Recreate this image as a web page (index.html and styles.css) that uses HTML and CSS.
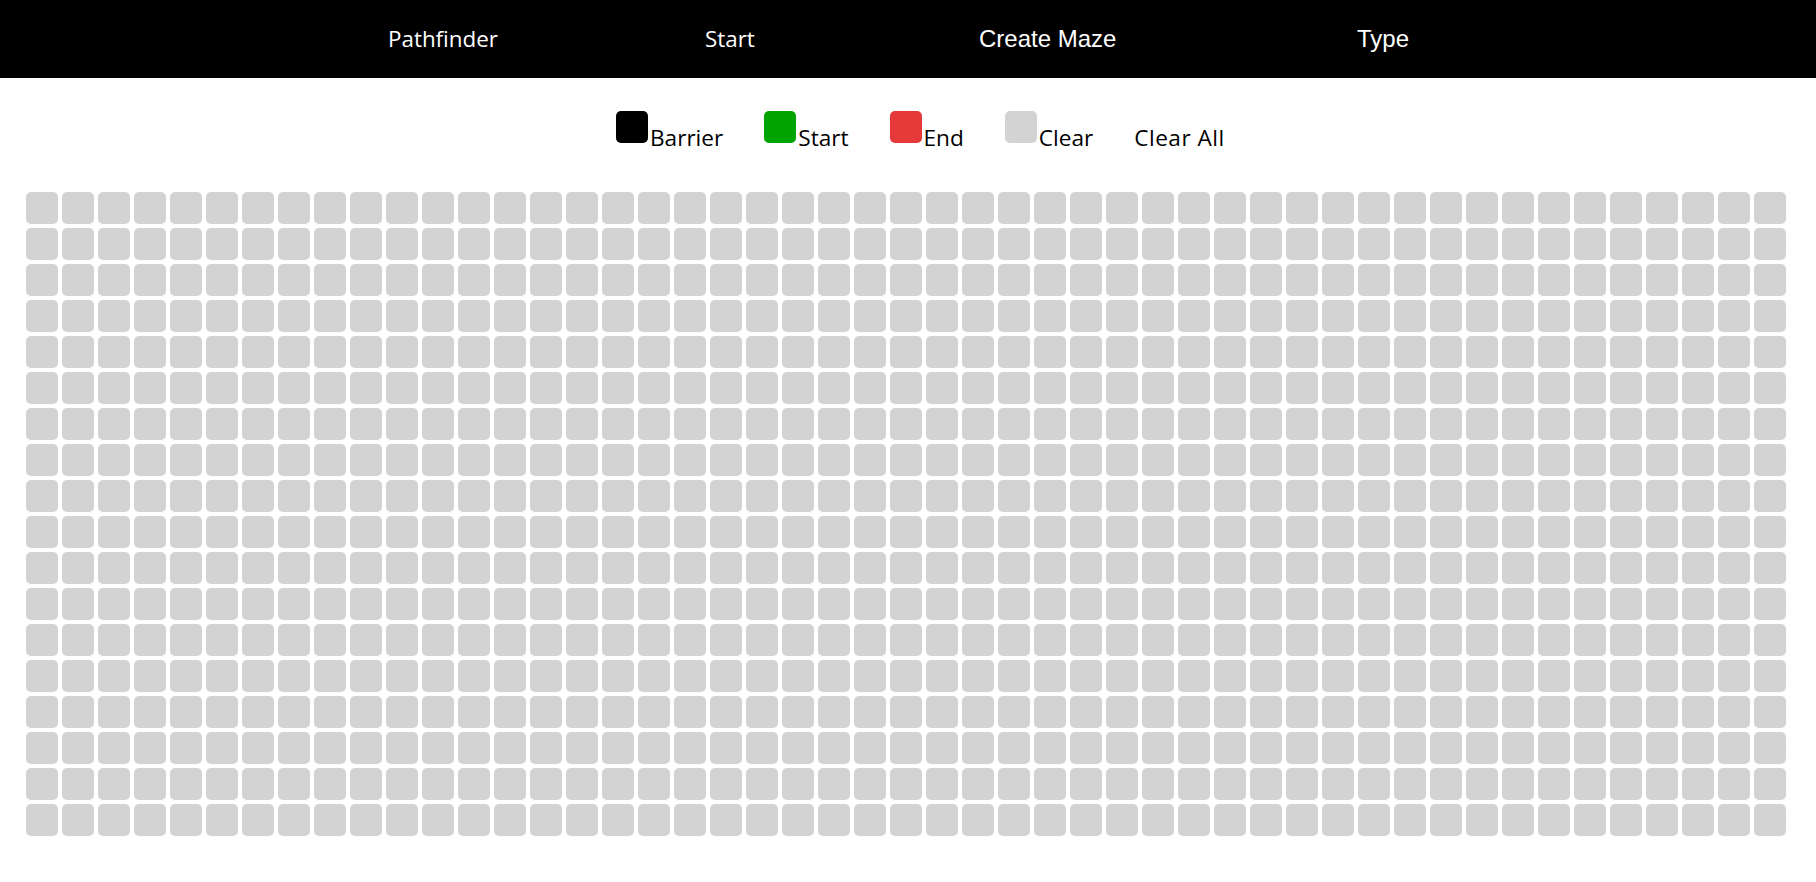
FILE: index.html
```html
<!DOCTYPE html>
<html lang="en">
<head>
<meta charset="utf-8">
<title>Pathfinder</title>
<link rel="stylesheet" href="styles.css">
</head>
<body>
<header class="topbar">
  <nav class="nav">
    <span class="nav-item nav-brand">Pathfinder</span>
    <span class="nav-item nav-start">Start</span>
    <span class="nav-item nav-maze">Create Maze</span>
    <span class="nav-item nav-type">Type</span>
  </nav>
</header>
<section class="legend">
  <span class="legend-item"><span class="swatch swatch-barrier"></span>Barrier</span>
  <span class="legend-item"><span class="swatch swatch-start"></span>Start</span>
  <span class="legend-item"><span class="swatch swatch-end"></span>End</span>
  <span class="legend-item"><span class="swatch swatch-clear"></span>Clear</span>
  <span class="legend-item legend-all">Clear All</span>
</section>
<main class="board" id="board"></main>
<script src="script.js"></script>
</body>
</html>
```
FILE: styles.css
```css
* { box-sizing: border-box; }
body {
  margin: 0;
  background: #fff;
  font-family: "Open Sans", "Noto Sans", sans-serif;
}
.topbar {
  height: 78px;
  padding-bottom: 2px;
  background: #000;
  color: #fff;
  display: flex;
  align-items: center;
}
.nav {
  display: flex;
  align-items: baseline;
  padding-left: 388px;
}
.nav-item {
  font-size: 22.4px;
  white-space: nowrap;
}
.nav-brand { width: 317px; }
.nav-start { width: 274px; }
.nav-maze {
  width: 378px;
  font-family: "Liberation Sans", Arial, sans-serif;
  font-size: 24px;
}
.nav-type {
  font-family: "Liberation Sans", Arial, sans-serif;
  font-size: 24px;
}
.legend {
  display: flex;
  align-items: baseline;
  padding-left: 616px;
  padding-top: 33px;
  gap: 41px;
  font-size: 22.6px;
  color: #000;
}
.legend-item {
  white-space: nowrap;
}
.legend-all {
  letter-spacing: 0.5px;
}
.swatch {
  display: inline-block;
  width: 32px;
  height: 32px;
  border-radius: 5px;
  margin-right: 2px;
  vertical-align: 3px;
}
.swatch-barrier { background: #000; }
.swatch-start { background: #00a400; }
.swatch-end { background: #e63a3a; }
.swatch-clear { background: #d3d3d3; }
.board {
  display: grid;
  grid-template-columns: repeat(49, 32px);
  grid-auto-rows: 32px;
  gap: 4px;
  padding-left: 26px;
  margin-top: 39px;
}
.cell {
  background: #d3d3d3;
  border-radius: 5px;
}
```
FILE: script.js
```js
var board = document.getElementById('board');
var frag = document.createDocumentFragment();
for (var i = 0; i < 49 * 18; i++) {
  var c = document.createElement('div');
  c.className = 'cell';
  frag.appendChild(c);
}
board.appendChild(frag);
```
